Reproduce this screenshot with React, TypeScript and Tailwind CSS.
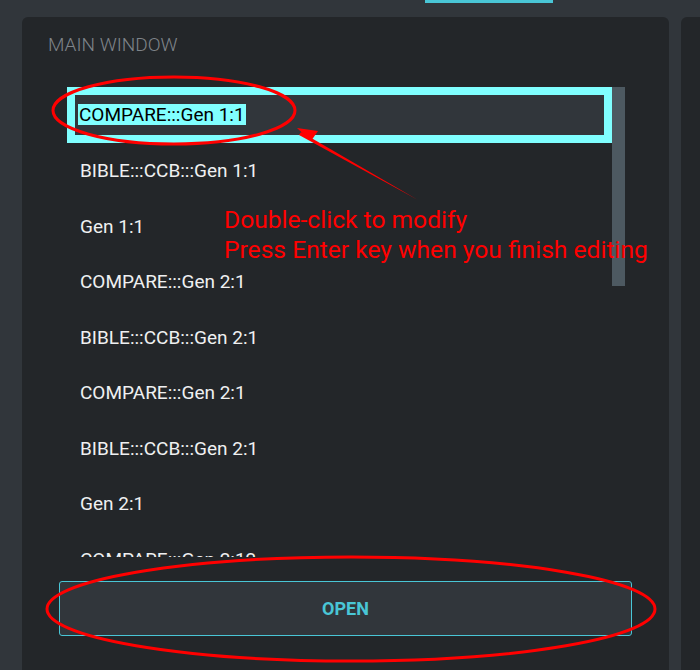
const items = [
  'BIBLE:::CCB:::Gen 1:1',
  'Gen 1:1',
  'COMPARE:::Gen 2:1',
  'BIBLE:::CCB:::Gen 2:1',
  'COMPARE:::Gen 2:1',
  'BIBLE:::CCB:::Gen 2:1',
  'Gen 2:1',
  'COMPARE:::Gen 2:12',
]

const Annotations = () => (
  <>
    <svg
      className="pointer-events-none absolute left-0 top-0"
      width={700}
      height={670}
      viewBox="0 0 700 670"
    >
      <ellipse cx={174} cy={110.5} rx={121} ry={33.5} fill="none" stroke="#ff0000" strokeWidth={3} />
      <polygon points="418,200 301,132 299,135" fill="#ff0000" />
      <polygon points="297,128 318,131 311,141" fill="#ff0000" />
      <ellipse cx={351} cy={609} rx={304} ry={52} fill="none" stroke="#ff0000" strokeWidth={3} />
    </svg>
    <div className="pointer-events-none absolute left-[224px] top-[205px] text-[24.6px] leading-[30px] text-[#ff0000]">
      <div>Double-click to modify</div>
      <div>Press Enter key when you finish editing</div>
    </div>
  </>
)

export default function App() {
  return (
    <div className="relative flex h-[670px] w-[700px] flex-col overflow-hidden bg-[#31363b] font-['Roboto',sans-serif]">
      <div className="h-[17px] shrink-0">
        <div className="ml-[425px] h-[3px] w-[128px] bg-[#49c6d6]" />
      </div>
      <div className="flex flex-1 gap-[12px]">
        <div className="ml-[22px] flex w-[647px] flex-col rounded-t-md bg-[#232629]">
          <h2 className="pl-[26px] pt-[16px] text-[19px] font-light leading-[24px] text-[#7f8489]">
            MAIN WINDOW
          </h2>
          <div className="ml-[45px] mt-[30px] flex h-[470px] w-[558px] overflow-hidden">
            <div className="flex w-[545px] flex-col">
              <div className="flex h-[55.5px] shrink-0 items-center border-[8px] border-[#80ffff] bg-[#31363b]">
                <span className="ml-[3px] bg-[#80ffff] px-[1px] text-[19px] leading-[21px] text-black">
                  COMPARE:::Gen 1:1
                </span>
              </div>
              {items.map((item, i) => (
                <div
                  key={i}
                  className="flex h-[55.5px] shrink-0 items-center pl-[13px] pt-[2px] text-[19px] text-[#eff0f1]"
                >
                  {item}
                </div>
              ))}
            </div>
            <div className="w-[13px]">
              <div className="h-[199px] w-full bg-[#4d5961]" />
            </div>
          </div>
          <button className="ml-[37px] mt-[24px] h-[55px] w-[573px] rounded-[3px] border border-[#49c6d6] bg-[#31363b] text-[18px] font-bold text-[#49c6d6]">
            OPEN
          </button>
        </div>
        <div className="flex-1 rounded-tl-md bg-[#232629]" />
      </div>
      <Annotations />
    </div>
  )
}
